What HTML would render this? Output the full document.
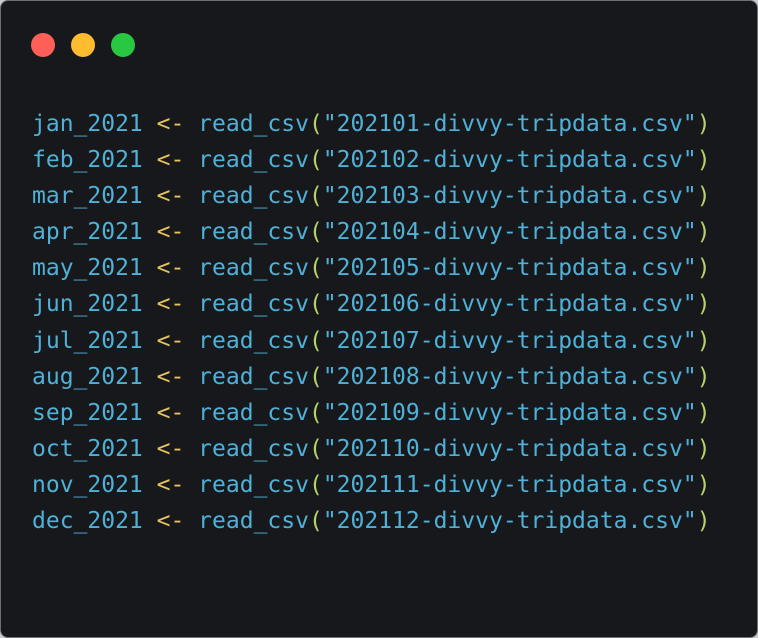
<!DOCTYPE html>
<html><head><style>
html,body{margin:0;padding:0;background:#c8cbd0;}
.win{position:absolute;left:0;top:0;width:756px;height:636px;background:#17181b;border:1px solid #6b7078;border-radius:8px;overflow:hidden;}
.dot{position:absolute;top:32px;width:24px;height:24px;border-radius:50%;}
pre{position:absolute;left:31px;top:105px;margin:0;font-family:"DejaVu Sans Mono","Liberation Mono",monospace;font-size:23px;line-height:36.1px;color:#4fb1d8;}
.a{color:#e6c35c}.p{color:#b5d36a}
</style></head><body>
<div class="win">
<div class="dot" style="left:30px;background:#ff5f57"></div>
<div class="dot" style="left:70px;background:#febc2e"></div>
<div class="dot" style="left:110px;background:#28c840"></div>
<pre>jan_2021 <span class="a">&lt;-</span> read_csv<span class="p">(</span>"202101-divvy-tripdata.csv"<span class="p">)</span>
feb_2021 <span class="a">&lt;-</span> read_csv<span class="p">(</span>"202102-divvy-tripdata.csv"<span class="p">)</span>
mar_2021 <span class="a">&lt;-</span> read_csv<span class="p">(</span>"202103-divvy-tripdata.csv"<span class="p">)</span>
apr_2021 <span class="a">&lt;-</span> read_csv<span class="p">(</span>"202104-divvy-tripdata.csv"<span class="p">)</span>
may_2021 <span class="a">&lt;-</span> read_csv<span class="p">(</span>"202105-divvy-tripdata.csv"<span class="p">)</span>
jun_2021 <span class="a">&lt;-</span> read_csv<span class="p">(</span>"202106-divvy-tripdata.csv"<span class="p">)</span>
jul_2021 <span class="a">&lt;-</span> read_csv<span class="p">(</span>"202107-divvy-tripdata.csv"<span class="p">)</span>
aug_2021 <span class="a">&lt;-</span> read_csv<span class="p">(</span>"202108-divvy-tripdata.csv"<span class="p">)</span>
sep_2021 <span class="a">&lt;-</span> read_csv<span class="p">(</span>"202109-divvy-tripdata.csv"<span class="p">)</span>
oct_2021 <span class="a">&lt;-</span> read_csv<span class="p">(</span>"202110-divvy-tripdata.csv"<span class="p">)</span>
nov_2021 <span class="a">&lt;-</span> read_csv<span class="p">(</span>"202111-divvy-tripdata.csv"<span class="p">)</span>
dec_2021 <span class="a">&lt;-</span> read_csv<span class="p">(</span>"202112-divvy-tripdata.csv"<span class="p">)</span></pre>
</div>
</body></html>
